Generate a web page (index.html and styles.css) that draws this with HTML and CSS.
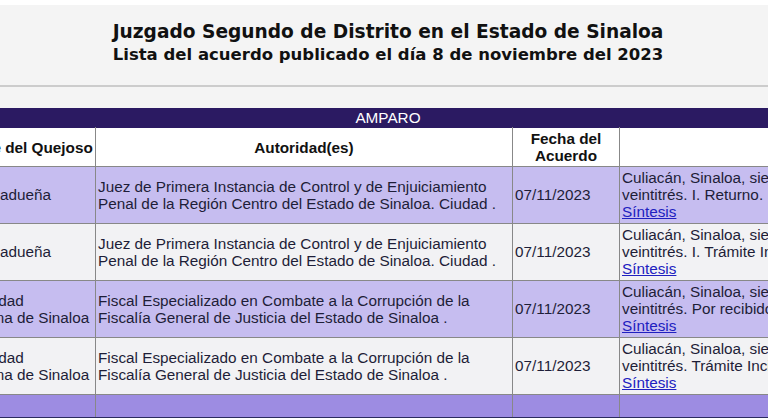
FILE: index.html
```html
<!DOCTYPE html>
<html lang="es">
<head>
<meta charset="utf-8">
<title>Lista de acuerdos</title>
<link rel="stylesheet" href="styles.css">
</head>
<body>
<div class="page">
  <header class="head">
    <h1 class="title">Juzgado Segundo de Distrito en el Estado de Sinaloa</h1>
    <h2 class="subtitle">Lista del acuerdo publicado el día 8 de noviembre del 2023</h2>
  </header>
  <div class="sep"></div>
  <div class="section">AMPARO</div>
  <table class="list">
    <colgroup>
      <col class="c1"><col class="c2"><col class="c3"><col class="c4">
    </colgroup>
    <tr class="hdr">
      <th>Nombre del Quejoso</th>
      <th>Autoridad(es)</th>
      <th>Fecha del Acuerdo</th>
      <th>Síntesis del Acuerdo</th>
    </tr>
    <tr class="odd">
      <td>Diana Madueña</td>
      <td>Juez de Primera Instancia de Control y de Enjuiciamiento Penal de la Región Centro del Estado de Sinaloa. Ciudad .</td>
      <td>07/11/2023</td>
      <td>Culiacán, Sinaloa, siete de noviembre de dos mil<br>veintitrés. I. Returno. I. Se tiene por recibido el oficio<br><a href="#">Síntesis</a></td>
    </tr>
    <tr class="even">
      <td>Diana Madueña</td>
      <td>Juez de Primera Instancia de Control y de Enjuiciamiento Penal de la Región Centro del Estado de Sinaloa. Ciudad .</td>
      <td>07/11/2023</td>
      <td>Culiacán, Sinaloa, siete de noviembre de dos mil<br>veintitrés. I. Trámite Incidental. Se tiene por recibido<br><a href="#">Síntesis</a></td>
    </tr>
    <tr class="odd">
      <td>Universidad Autónoma de Sinaloa</td>
      <td>Fiscal Especializado en Combate a la Corrupción de la Fiscalía General de Justicia del Estado de Sinaloa .</td>
      <td>07/11/2023</td>
      <td>Culiacán, Sinaloa, siete de noviembre de dos mil<br>veintitrés. Por recibido el oficio de cuenta y anexos<br><a href="#">Síntesis</a></td>
    </tr>
    <tr class="even">
      <td>Universidad Autónoma de Sinaloa</td>
      <td>Fiscal Especializado en Combate a la Corrupción de la Fiscalía General de Justicia del Estado de Sinaloa .</td>
      <td>07/11/2023</td>
      <td>Culiacán, Sinaloa, siete de noviembre de dos mil<br>veintitrés. Trámite Incidental. Se tiene por recibido<br><a href="#">Síntesis</a></td>
    </tr>
    <tr class="next">
      <td>&nbsp;</td><td>&nbsp;</td><td>&nbsp;</td><td>&nbsp;</td>
    </tr>
  </table>
</div>
</body>
</html>
```
FILE: styles.css
```css
html, body {
  margin: 0;
  padding: 0;
  overflow: hidden;
  background: #ffffff;
}
.page {
  margin-top: 5px;
  background: #f4f4f4;
  min-height: 420px;
  width: 768px;
}
.head {
  padding: 15px 0 19px 8px;
  text-align: center;
  font-family: "DejaVu Sans", Verdana, sans-serif;
  font-weight: bold;
  color: #111111;
}
.title {
  margin: 0;
  font-size: 18.6px;
  line-height: 23px;
}
.subtitle {
  margin: 0;
  font-size: 16.5px;
  line-height: 23px;
}
.sep {
  height: 2px;
  background: #cccccc;
  margin-bottom: 21px;
}
.section {
  background: #2b1a62;
  color: #ffffff;
  text-align: center;
  padding: 1px 0 1px 8px;
  font-family: "Liberation Sans", Arial, sans-serif;
  font-size: 15.3px;
  line-height: 17px;
}
.list {
  border-collapse: collapse;
  table-layout: fixed;
  width: 1280px;
  margin-left: -60px;
  font-family: "Liberation Sans", Arial, sans-serif;
  font-size: 15.3px;
  line-height: 17px;
  color: #1e1e38;
}
.c1 { width: 155px; }
.c2 { width: 417px; }
.c3 { width: 107px; }
.c4 { width: 601px; }
.list td, .list th {
  border: 1px solid #888888;
  padding: 2px 2px 3px;
  vertical-align: middle;
  text-align: left;
  overflow: hidden;
}
.hdr th {
  background: #ffffff;
  color: #111111;
  font-weight: bold;
  text-align: center;
  padding: 2px 2px;
  border-top-color: #2b1a62;
}
.odd td { background: #c6bdf0; }
.even td { background: #f2f2f4; }
.next td {
  background: #9d8ce2;
  border-bottom-color: #2b2b5f;
}
.list a {
  color: #2020c0;
  text-decoration: underline;
}
```
